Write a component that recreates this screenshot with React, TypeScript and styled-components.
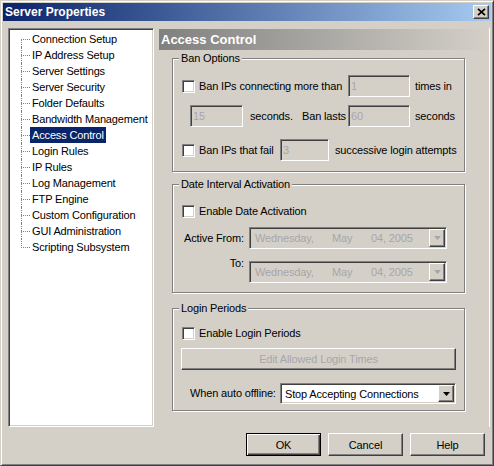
import React from "react";
import styled, { createGlobalStyle, css } from "styled-components";

const GlobalStyle = createGlobalStyle`
  html, body {
    margin: 0;
    padding: 0;
    background: #d4d0c8;
  }
  body {
    font-family: "Liberation Sans", Arial, sans-serif;
    font-size: 11px;
    letter-spacing: -0.15px;
    color: #000;
  }
  * {
    box-sizing: border-box;
  }
`;

const raised = css`
  background: #d4d0c8;
  border: 1px solid;
  border-color: #fff #404040 #404040 #fff;
  box-shadow: inset -1px -1px 0 #808080, inset 1px 1px 0 #d4d0c8;
`;

const sunken = css`
  border: 1px solid;
  border-color: #808080 #fff #fff #808080;
  box-shadow: inset 1px 1px 0 #404040, inset -1px -1px 0 #d4d0c8;
`;

const Window = styled.div`
  width: 494px;
  height: 466px;
  display: flex;
  flex-direction: column;
  padding: 2px;
  background: #d4d0c8;
  border: 1px solid;
  border-color: #d4d0c8 #404040 #404040 #d4d0c8;
  box-shadow: inset 1px 1px 0 #fff, inset -1px -1px 0 #808080;
`;

const TitleBar = styled.div`
  height: 18px;
  display: flex;
  align-items: center;
  justify-content: space-between;
  padding: 0 2px;
  background: linear-gradient(to right, #0a246a, #a6caf0);
`;

const TitleText = styled.span`
  color: #fff;
  font-weight: bold;
  font-size: 12px;
  letter-spacing: 0;
  white-space: nowrap;
`;

const CloseButton = styled.div`
  ${raised};
  width: 16px;
  height: 14px;
  display: flex;
  align-items: center;
  justify-content: center;
`;

const Body = styled.div`
  flex: 1;
  display: flex;
  flex-direction: column;
  padding: 7px 1px 0 5px;
`;

const Main = styled.div`
  display: flex;
  gap: 4px;
  height: 399px;
`;

const Tree = styled.div`
  ${sunken};
  width: 146px;
  background: #fff;
`;

const TreeList = styled.ul`
  list-style: none;
  margin: 0;
  padding: 2px 0 0 0;
`;

const TreeRow = styled.li<{ $first?: boolean; $last?: boolean }>`
  position: relative;
  height: 16px;
  padding-left: 21px;
  display: flex;
  align-items: stretch;

  &::before {
    content: "";
    position: absolute;
    left: 12px;
    top: 8px;
    width: 9px;
    border-top: 1px dotted #808080;
  }

  &::after {
    content: "";
    position: absolute;
    left: 12px;
    top: ${(p) => (p.$first ? "8px" : "0")};
    bottom: ${(p) => (p.$last ? "7px" : "0")};
    border-left: 1px dotted #808080;
  }
`;

const TreeLabel = styled.span<{ $selected?: boolean }>`
  padding: 0 2px;
  line-height: 16px;
  white-space: nowrap;
  background: ${(p) => (p.$selected ? "#0a246a" : "transparent")};
  color: ${(p) => (p.$selected ? "#fff" : "#000")};
`;

const Pane = styled.div`
  width: 332px;
  display: flex;
  flex-direction: column;
  border-right: 1px solid #fff;
`;

const PaneHeader = styled.div`
  margin: 1px 1px 0 1px;
  height: 21px;
  padding-left: 2px;
  line-height: 21px;
  font-size: 13px;
  font-weight: bold;
  letter-spacing: 0;
  color: #fff;
  background: linear-gradient(to right, #808080, #d4d0c8);
`;

const Group = styled.div<{ $h: number; $mt: number }>`
  position: relative;
  margin-left: 14px;
  margin-top: ${(p) => p.$mt}px;
  width: 293px;
  height: ${(p) => p.$h}px;
  border: 1px solid #808080;
  box-shadow: inset 1px 1px 0 #fff, 1px 1px 0 #fff;
  display: flex;
  flex-direction: column;
`;

const Legend = styled.span`
  position: absolute;
  top: -7px;
  left: 6px;
  padding: 0 2px;
  line-height: 13px;
  background: #d4d0c8;
  white-space: nowrap;
`;

const GroupBody = styled.div<{ $pt: number }>`
  padding-top: ${(p) => p.$pt}px;
  display: flex;
  flex-direction: column;
`;

const Row = styled.div<{ $mt?: number; $pl?: number; $h?: number }>`
  display: flex;
  align-items: center;
  margin-top: ${(p) => p.$mt ?? 0}px;
  padding-left: ${(p) => p.$pl ?? 0}px;
  height: ${(p) => (p.$h ? `${p.$h}px` : "auto")};
`;

const Checkbox = styled.span`
  ${sunken};
  width: 13px;
  height: 13px;
  flex: none;
  background: #fff;
  margin-right: 4px;
`;

const Text = styled.span<{ $w?: number; $ml?: number; $right?: boolean; $raise?: number }>`
  white-space: nowrap;
  flex: none;
  line-height: 13px;
  width: ${(p) => (p.$w ? `${p.$w}px` : "auto")};
  margin-left: ${(p) => p.$ml ?? 0}px;
  text-align: ${(p) => (p.$right ? "right" : "left")};
  ${(p) =>
    p.$raise
      ? css`
          align-self: flex-start;
          margin-top: -${p.$raise}px;
        `
      : ""}
`;

const TextBox = styled.span<{ $w: number }>`
  ${sunken};
  width: ${(p) => p.$w}px;
  height: 22px;
  flex: none;
  background: #d4d0c8;
  color: #a7a6aa;
  padding-left: 2px;
  line-height: 20px;
`;

const DatePicker = styled.div`
  ${sunken};
  width: 198px;
  height: 22px;
  margin-left: 5px;
  display: flex;
  align-items: center;
  padding-left: 5px;
  padding-right: 1px;
  background: #d4d0c8;
  color: #a7a6aa;
`;

const DateSeg = styled.span<{ $w?: number }>`
  white-space: nowrap;
  width: ${(p) => (p.$w ? `${p.$w}px` : "auto")};
`;

const DropButton = styled.span<{ $h: number }>`
  ${raised};
  margin-left: auto;
  width: 16px;
  height: ${(p) => p.$h}px;
  display: flex;
  align-items: center;
  justify-content: center;
`;

const WideButton = styled.div`
  ${raised};
  margin-left: 8px;
  width: 275px;
  height: 22px;
  display: flex;
  align-items: center;
  justify-content: center;
  color: #a7a6aa;
`;

const Select = styled.div`
  ${sunken};
  width: 176px;
  height: 21px;
  display: flex;
  align-items: center;
  padding: 0 1px 0 4px;
  background: #fff;
  white-space: nowrap;
`;

const Footer = styled.div`
  display: flex;
  justify-content: flex-end;
  gap: 7px;
  margin-top: 6px;
  padding-right: 5px;
`;

const DialogButton = styled.button<{ $default?: boolean }>`
  width: 75px;
  height: 23px;
  padding: 0;
  font: inherit;
  letter-spacing: inherit;
  color: #000;
  background: #d4d0c8;
  border: 1px solid;
  border-color: ${(p) => (p.$default ? "#000" : "#fff #404040 #404040 #fff")};
  box-shadow: ${(p) =>
    p.$default
      ? "inset 1px 1px 0 #fff, inset -1px -1px 0 #404040, inset -2px -2px 0 #808080"
      : "inset -1px -1px 0 #808080, inset 1px 1px 0 #d4d0c8"};
`;

const Arrow = ({ color }: { color: string }) => (
  <svg width="7" height="4" viewBox="0 0 7 4">
    <path d="M0 0h7L3.5 4z" fill={color} />
  </svg>
);

const treeItems = [
  "Connection Setup",
  "IP Address Setup",
  "Server Settings",
  "Server Security",
  "Folder Defaults",
  "Bandwidth Management",
  "Access Control",
  "Login Rules",
  "IP Rules",
  "Log Management",
  "FTP Engine",
  "Custom Configuration",
  "GUI Administration",
  "Scripting Subsystem",
];

const DateField = () => (
  <DatePicker>
    <DateSeg $w={77}>Wednesday,</DateSeg>
    <DateSeg $w={39}>May</DateSeg>
    <DateSeg>04, 2005</DateSeg>
    <DropButton $h={18}>
      <Arrow color="#a7a6aa" />
    </DropButton>
  </DatePicker>
);

export default function App() {
  return (
    <>
      <GlobalStyle />
      <Window>
        <TitleBar>
          <TitleText>Server Properties</TitleText>
          <CloseButton>
            <svg width="9" height="8" viewBox="0 0 9 8">
              <path d="M1 0.8l7 6.4M8 0.8L1 7.2" stroke="#000" strokeWidth="1.7" />
            </svg>
          </CloseButton>
        </TitleBar>
        <Body>
          <Main>
            <Tree>
              <TreeList>
                {treeItems.map((item, i) => (
                  <TreeRow key={item} $first={i === 0} $last={i === treeItems.length - 1}>
                    <TreeLabel $selected={item === "Access Control"}>{item}</TreeLabel>
                  </TreeRow>
                ))}
              </TreeList>
            </Tree>
            <Pane>
              <PaneHeader>Access Control</PaneHeader>

              <Group $h={114} $mt={8}>
                <Legend>Ban Options</Legend>
                <GroupBody $pt={16}>
                  <Row $pl={9} $h={22}>
                    <Checkbox />
                    <Text $w={149}>Ban IPs connecting more than</Text>
                    <TextBox $w={62}>1</TextBox>
                    <Text $ml={5}>times in</Text>
                  </Row>
                  <Row $pl={17} $h={22} $mt={8}>
                    <TextBox $w={53}>15</TextBox>
                    <Text $ml={7} $w={52}>seconds.</Text>
                    <Text $w={46}>Ban lasts</Text>
                    <TextBox $w={62}>60</TextBox>
                    <Text $ml={5}>seconds</Text>
                  </Row>
                  <Row $pl={9} $h={22} $mt={12}>
                    <Checkbox />
                    <Text $w={81}>Ban IPs that fail</Text>
                    <TextBox $w={49}>3</TextBox>
                    <Text $ml={6}>successive login attempts</Text>
                  </Row>
                </GroupBody>
              </Group>

              <Group $h={109} $mt={12}>
                <Legend>Date Interval Activation</Legend>
                <GroupBody $pt={20}>
                  <Row $pl={9} $h={13}>
                    <Checkbox />
                    <Text>Enable Date Activation</Text>
                  </Row>
                  <Row $h={22} $mt={9}>
                    <Text $w={71} $right>
                      Active From:
                    </Text>
                    <DateField />
                  </Row>
                  <Row $h={22} $mt={12}>
                    <Text $w={71} $right $raise={4}>
                      To:
                    </Text>
                    <DateField />
                  </Row>
                </GroupBody>
              </Group>

              <Group $h={103} $mt={15}>
                <Legend>Login Periods</Legend>
                <GroupBody $pt={18}>
                  <Row $pl={9} $h={13}>
                    <Checkbox />
                    <Text>Enable Login Periods</Text>
                  </Row>
                  <Row $mt={8}>
                    <WideButton>Edit Allowed Login Times</WideButton>
                  </Row>
                  <Row $pl={17} $h={21} $mt={13}>
                    <Text $w={90}>When auto offline:</Text>
                    <Select>
                      Stop Accepting Connections
                      <DropButton $h={17}>
                        <Arrow color="#000" />
                      </DropButton>
                    </Select>
                  </Row>
                </GroupBody>
              </Group>
            </Pane>
          </Main>
          <Footer>
            <DialogButton $default>OK</DialogButton>
            <DialogButton>Cancel</DialogButton>
            <DialogButton>Help</DialogButton>
          </Footer>
        </Body>
      </Window>
    </>
  );
}
